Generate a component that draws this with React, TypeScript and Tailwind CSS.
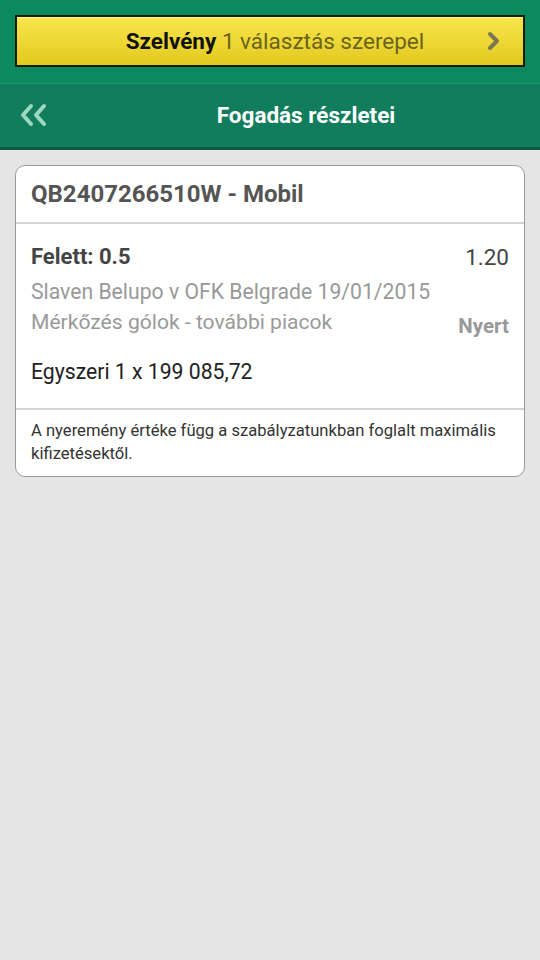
export default function App() {
  return (
    <div className="min-h-[960px] w-[540px] bg-[#e5e5e5] font-['Roboto',sans-serif]">
      {/* Betslip bar */}
      <div className="bg-[#0c8a5f] px-[15px] pt-[15px] pb-[16px] border-b border-[#1a9a70]">
        <div className="flex h-[52px] items-center border-2 border-[#1c1c0c] bg-gradient-to-b from-[#f7e74a] to-[#e3c91c] shadow-[inset_0_1px_0_#fff7a0]">
          <div className="flex-1 pl-[46px] text-center text-[22.5px] leading-none">
            <span className="font-bold text-[#111]">Szelvény</span>
            <span className="text-[#6b6320]"> 1 választás szerepel</span>
          </div>
          <svg width="14" height="20" viewBox="0 0 14 20" className="mr-[22px]">
            <path d="M3 3 L10 10 L3 17" fill="none" stroke="#7b7552" strokeWidth="4" strokeLinecap="round" strokeLinejoin="round" />
          </svg>
        </div>
      </div>

      {/* Header */}
      <div className="relative flex h-[66px] items-center justify-center bg-[#117d5c] border-b-[3px] border-[#0b5b43] pl-[72px]">
        <svg width="30" height="24" viewBox="0 0 30 24" className="absolute left-[19px] top-[19px]">
          <path d="M12 3 L4 12 L12 21" fill="none" stroke="#9ed8bf" strokeWidth="4" strokeLinecap="round" strokeLinejoin="round" />
          <path d="M25 3 L17 12 L25 21" fill="none" stroke="#9ed8bf" strokeWidth="4" strokeLinecap="round" strokeLinejoin="round" />
        </svg>
        <h1 className="text-[22.5px] font-bold text-white">Fogadás részletei</h1>
      </div>

      {/* Card */}
      <div className="px-[15px] pt-[15px]">
        <div className="overflow-hidden rounded-[10px] border border-[#9a9a9a] bg-white">
          <div className="flex h-[58px] items-center border-b-2 border-[#d4d4d4] px-[15px]">
            <span className="text-[24px] font-bold text-[#555]">QB2407266510W - Mobil</span>
          </div>

          <div className="border-b-2 border-[#d4d4d4] px-[15px] pt-[18px] pb-[21px] leading-[30px]">
            <div className="flex items-center justify-between">
              <span className="text-[22px] font-bold text-[#444]">Felett: 0.5</span>
              <span className="text-[22.5px] text-[#444]">1.20</span>
            </div>
            <div className="mt-[5px] text-[21.2px] text-[#999]">Slaven Belupo v OFK Belgrade 19/01/2015</div>
            <div className="-mt-[4px] flex items-center justify-between">
              <span className="text-[21.1px] text-[#999]">Mérkőzés gólok - további piacok</span>
              <span className="mt-[8px] text-[20.5px] font-bold text-[#999]">Nyert</span>
            </div>
            <div className="mt-[16px] text-[21.2px] text-[#222]">Egyszeri 1 x 199 085,72</div>
          </div>

          <div className="px-[15px] pt-[9px] pb-[11px] text-[16.6px] leading-[23px] text-[#333]">
            A nyeremény értéke függ a szabályzatunkban foglalt maximális kifizetésektől.
          </div>
        </div>
      </div>
    </div>
  );
}
